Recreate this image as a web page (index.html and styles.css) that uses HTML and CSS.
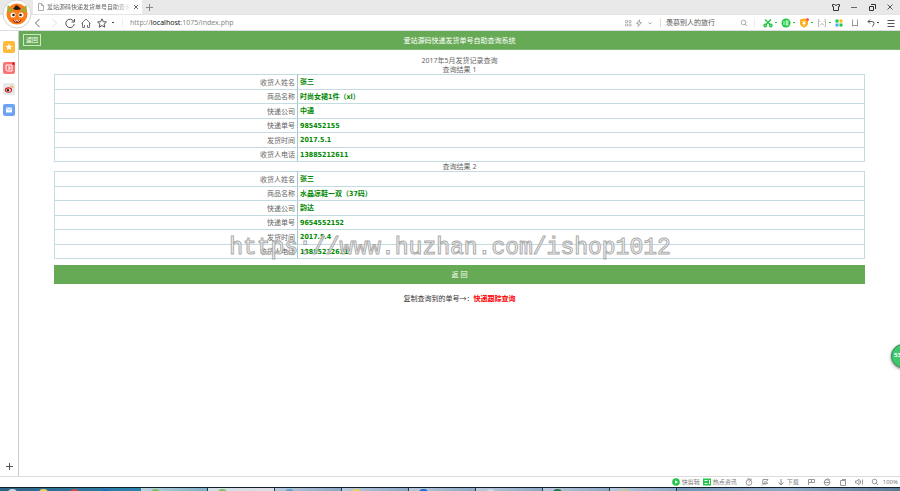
FILE: index.html
```html
<!DOCTYPE html>
<html lang="zh-CN">
<head>
  <meta charset="UTF-8" />
  <meta name="viewport" content="width=device-width, initial-scale=1" />
  <title>爱站源码快递发货单号自助查询系统</title>
  <link rel="stylesheet" href="styles.css">
</head>
<body>

  <header class="browser-top">
    <svg class="avatar" viewBox="0 0 30 30">
      <circle cx="15" cy="15" r="14" fill="#fff" stroke="#d4d4d4" stroke-width="1"/>
      <circle cx="15" cy="15" r="10.500" fill="#ff7d18"/>
      <path d="M7 14 Q4 10 6 6 Q9 10 12 11 Z M23 14 Q26 10 24 6 Q21 10 18 11 Z" fill="#a9a632"/>
      <path d="M11 10 Q12 9 14 6 Q17 7 19 10 Q15 12 11 10" fill="#2b1b12"/>
      <circle cx="11" cy="16" r="2.500" fill="#fff"/><circle cx="19" cy="16" r="2.500" fill="#fff"/>
      <circle cx="11.500" cy="16" r="1.300" fill="#32231b"/><circle cx="18.500" cy="16" r="1.300" fill="#32231b"/>
      <path d="M10 20 Q15 24 20 20 L18 23 Q15 25 12 23 Z" fill="#8c2517"/>
      <path d="M12 21 l1.500 1.500 l1.500-1 l1.500 1 l1.500-1.500" fill="none" stroke="#fff" stroke-width=".8"/>
    </svg>

    <div class="tab-strip">
      <div class="tab">
        <svg class="tab-icon" viewBox="0 0 8 8" fill="none" stroke="#aaa"><path d="M1.500 .5h3l2 2v5h-5z M4.500 .5v2h2"/></svg>
        <span class="tab-title">爱站源码快递发货单号自助查询</span>
        <button class="tab-close" aria-label="关闭标签"><svg viewBox="0 0 6 6" stroke="#666"><path d="M1 1l4 4M5 1l-4 4"/></svg></button>
      </div>
      <button class="tab-add" aria-label="新建标签"><svg viewBox="0 0 8 8" stroke="#888"><path d="M4.500 1v7M1 4.500h7"/></svg></button>
      <div class="window-buttons">
        <button aria-label="皮肤"><svg viewBox="0 0 8 8" fill="none" stroke="#333"><path d="M2.500 1.500h-2v2h1v4h5v-4h1v-2h-2l-1.500 1z"/></svg></button>
        <button aria-label="最小化"><svg viewBox="0 0 8 8" stroke="#666"><path d="M1 4.500h6"/></svg></button>
        <button aria-label="还原"><svg viewBox="0 0 8 8" fill="none" stroke="#333"><path d="M1.500 3.500h4v4h-4z M3 1.500h4.500V6"/></svg></button>
        <button aria-label="关闭"><svg viewBox="0 0 8 8" stroke="#555"><path d="M1.500 1.500l5 5M6.500 1.500l-5 5"/></svg></button>
      </div>
    </div>

    <div class="toolbar">
      <div class="nav-buttons">
        <button aria-label="后退"><svg viewBox="0 0 10 10" fill="none" stroke="#666"><path d="M6.500 1L2.500 5l4 4"/></svg></button>
        <button aria-label="前进"><svg viewBox="0 0 10 10" fill="none" stroke="#ddd"><path d="M3.500 1l4 4-4 4"/></svg></button>
        <button aria-label="刷新"><svg viewBox="0 0 10 10" fill="none" stroke="#555"><path d="M8.800 3.500A4.200 4.200 0 1 0 9.200 6M9.500 1v3h-3"/></svg></button>
        <button aria-label="主页"><svg viewBox="0 0 10 10" fill="none" stroke="#777"><path d="M.5 5.500L5 1l4.500 4.500M1.500 5v4.500h2V7M8.500 5v4.500h-2V7"/></svg></button>
        <button aria-label="收藏"><svg viewBox="0 0 10 10" fill="none" stroke="#555"><path d="M5 .8l1.300 2.900 3.100.3-2.300 2.100.7 3.100L5 7.600 2.200 9.200l.7-3.100L.6 4l3.100-.3z"/></svg></button>
      </div>
      <span class="dot dark"></span>
      <div class="address" role="textbox" aria-label="地址">http://<span class="host">localhost</span>:1075/index.php</div>
      <div class="address-tools">
        <svg viewBox="0 0 8 8" fill="none" stroke="#bbb"><path d="M1.500 1.500h2v2h-2zM5 1.500h2v2H5zM1.500 5h2v2h-2zM5 5h2v2H5z"/></svg>
        <svg viewBox="0 0 8 8" fill="none" stroke="#aaa"><path d="M4.500.8L1.500 4.500h2l-.5 3 3.500-4h-2z"/></svg>
        <svg viewBox="0 0 8 8" fill="none" stroke="#aaa"><path d="M2.500 3.500L4 5l1.500-1.500"/></svg>
      </div>
      <input class="search" type="text" aria-label="搜索" value="羡慕别人的旅行">
      <svg class="search-icon" viewBox="0 0 8 8" fill="none" stroke="#aaa"><circle cx="3.500" cy="3.500" r="2.300"/><path d="M5 5l2 2"/></svg>
      <div class="tools">
        <button class="drop" aria-label="截图"><svg viewBox="0 0 10 10" fill="none" stroke="#20c643" stroke-width="1.400"><path d="M2 1.500l5 5M8 1.500l-5 5"/><circle cx="2.200" cy="7.500" r="1.200"/><circle cx="7.800" cy="7.500" r="1.200"/></svg></button>
        <button class="drop" aria-label="翻译"><svg viewBox="0 0 10 10" fill="none"><circle cx="5" cy="5" r="4.500" fill="#1fc846"/><path d="M3 3v4M4.500 3h3M4.500 5h3M6 3v4.500M4.500 6.800h3" stroke="#d8ffe0"/></svg></button>
        <button class="drop" aria-label="网银"><svg viewBox="0 0 10 10" fill="none"><path d="M5 .5l4 1V5q0 3-4 4.700Q1 8 1 5V1.500z" fill="#fcae17"/><path d="M3.500 3L5 5l1.500-2M5 5v3M3.500 5.500h3" stroke="#fff"/><circle cx="8.500" cy="1.500" r="1.500" fill="#f55"/></svg></button>
        <button class="drop" aria-label="游戏"><svg viewBox="0 0 10 10" fill="none" stroke="#bbb"><path d="M2.500 1.500h-1v7h1M7.500 1.500h1v7h-1M3 7l2-1.500L7 7M3 3v1M7 3v1"/></svg></button>
        <button aria-label="应用"><svg viewBox="0 0 8 8"><path d="M.5.5h3v3h-3z" fill="#1bc946"/><path d="M4.500.5h3v3h-3z" fill="#fdb913"/><path d="M.5 4.500h3v3h-3z" fill="#39b3f4"/><path d="M4.500 4.500h3v3h-3z" fill="#1bc946"/></svg></button>
        <button aria-label="书签"><svg viewBox="0 0 8 8" fill="none" stroke="#999"><path d="M1.500.5v7M6.500.5v7M1.500 6.500h5"/></svg></button>
        <button class="drop dark" aria-label="撤销"><svg viewBox="0 0 8 8" fill="none" stroke="#555"><path d="M3 .5l-2 2 2 2M1 2.500h4q2 0 2 2t-2 3"/></svg></button>
        <button aria-label="菜单"><svg viewBox="0 0 8 8" stroke="#555"><path d="M.5 1.500h7M.5 4.500h7M.5 7.500h7"/></svg></button>
      </div>
    </div>
  </header>

  <div class="browser-body">
    <aside class="sidebar">
      <svg viewBox="0 0 12 12"><rect width="12" height="12" rx="2" fill="#fdba3d"/><path d="M6 2.500l1 2.300 2.500.2-1.900 1.600.6 2.400L6 7.700 3.800 9l.6-2.400L2.500 5 5 4.800z" fill="#fff"/></svg>
      <svg viewBox="0 0 12 12"><rect width="12" height="12" rx="2" fill="#fa7272"/><path d="M3 3h6v6H4.500L3 8zM5 5h2v2H5" fill="none" stroke="#fff"/><circle cx="10.500" cy="1.500" r="1.500" fill="#f02020"/></svg>
      <svg viewBox="0 0 12 12"><rect width="12" height="12" rx="2" fill="#e8e8e8"/><ellipse cx="5.500" cy="7" rx="3.700" ry="2.800" fill="#d22"/><ellipse cx="5.500" cy="7.200" rx="2.300" ry="1.600" fill="#fff"/><circle cx="5" cy="7.200" r="1.200" fill="#222"/><path d="M7.500 3q2.500-.5 2.500 2" fill="none" stroke="#f79b22"/></svg>
      <svg viewBox="0 0 12 12"><rect width="12" height="12" rx="2" fill="#6da3f5"/><path d="M3 3.500h6v5H3z" fill="#fff"/><path d="M3 4l3 2 3-2" fill="none" stroke="#a9c8f8"/></svg>
      <button class="side-add" aria-label="添加"><svg viewBox="0 0 7 7" stroke="#555"><path d="M3.500 0v7M0 3.500h7"/></svg></button>
    </aside>

    <main class="page">
      <div class="page-header">
        <button class="back-small">返回</button>
        <h1>爱站源码快递发货单号自助查询系统</h1>
      </div>

      <div class="results">
        <p class="result-title">2017年5月发货记录查询</p>
        <table class="result">
          <caption>查询结果 1</caption>
          <tr><th scope="row">收货人姓名</th><td>张三</td></tr>
          <tr><th scope="row">商品名称</th><td>时尚女裙1件（xl）</td></tr>
          <tr><th scope="row">快递公司</th><td>中通</td></tr>
          <tr><th scope="row">快递单号</th><td>985452155</td></tr>
          <tr><th scope="row">发货时间</th><td>2017.5.1</td></tr>
          <tr><th scope="row">收货人电话</th><td>13885212611</td></tr>
        </table>
        <table class="result">
          <caption>查询结果 2</caption>
          <tr><th scope="row">收货人姓名</th><td>张三</td></tr>
          <tr><th scope="row">商品名称</th><td>水晶凉鞋一双（37码）</td></tr>
          <tr><th scope="row">快递公司</th><td>韵达</td></tr>
          <tr><th scope="row">快递单号</th><td>9654552152</td></tr>
          <tr><th scope="row">发货时间</th><td>2017.5.4</td></tr>
          <tr><th scope="row">收货人电话</th><td>13885212611</td></tr>
        </table>
        <button class="back-wide">返 回</button>
        <p class="track">复制查询到的单号→：<a href="#">快递跟踪查询</a></p>
      </div>

      <div class="speed-ball">53%</div>
    </main>
  </div>

  <footer class="status-bar">
    <span class="status-item"><svg viewBox="0 0 8 8"><circle cx="4" cy="4" r="3.800" fill="#1fc846"/><path d="M3 2.200L6 4 3 5.800z" fill="#fff"/></svg>快剪辑</span>
    <span class="status-item"><svg viewBox="0 0 8 8"><path d="M0 .5h8v7H0z" fill="#1fc846"/><path d="M1.500 2.500h3M1.500 5.500h3M6.500 2v4" stroke="#fff"/></svg>热点资讯</span>
    <svg viewBox="0 0 8 8" fill="none" stroke="#999"><circle cx="4" cy="4.500" r="2.800"/><path d="M4 4.500l2.500-3.500M2 1h4"/></svg>
    <svg viewBox="0 0 8 8" fill="none" stroke="#999"><path d="M2 1.500h5l-1.500 2 1 2h-5zM1 7.500l2-2M4 3v4"/></svg>
    <span class="status-item"><svg viewBox="0 0 8 8" fill="none" stroke="#888"><path d="M4 1v6M1.500 4.500L4 7l2.500-2.500"/></svg>下载</span>
    <svg viewBox="0 0 8 8" fill="none" stroke="#999"><path d="M1.500 7V1.500h6v3h-6M4.500 2v2"/></svg>
    <svg viewBox="0 0 8 8" fill="none" stroke="#999"><circle cx="4" cy="4.500" r="2.800"/><path d="M1 4.500h6M2 2Q5-.5 7 2"/></svg>
    <svg viewBox="0 0 8 8" fill="none" stroke="#999"><path d="M1.500 2.500h5v5h-5zM3 1.500h4"/></svg>
    <svg viewBox="0 0 8 8" fill="none" stroke="#999"><path d="M.5 3h1.500l2-2v6l-2-2H.5zM5.500 2.500v3M7.500 1.500v5"/></svg>
    <span class="status-item zoom"><svg viewBox="0 0 8 8" fill="none" stroke="#999"><circle cx="3.500" cy="3.500" r="2.300"/><path d="M5 5l2 2"/></svg>100%</span>
  </footer>

  <div class="taskbar">
    <div class="task-start"><i class="gray"></i><i class="yellow"></i><i class="red"></i><i class="blue"></i></div>
    <div class="task light"><i class="green"></i></div>
    <div class="task light pale"><i class="green"></i></div>
    <div class="task"><i class="sky"></i></div>
    <div class="task"><i class="yellow"></i></div>
    <div class="task"><i class="blue"></i></div>
    <div class="task"><i class="gray"></i></div>
    <div class="task"><i class="darkgreen"></i></div>
    <div class="task"><i class="sand"></i></div>
    <div class="task-tray"></div>
  </div>

  <div class="watermark">https://www.huzhan.com/ishop1012</div>

</body>
</html>
```
FILE: styles.css
```css
* {
  box-sizing: border-box;
  margin: 0;
  padding: 0;
}

body {
  position: relative;
  font-family: "Noto Sans", "Noto Sans CJK SC", sans-serif;
  font-size: 7px;
  line-height: 9px;
  color: #666;
  background: #fff;
  height: 100vh;
  display: flex;
  flex-direction: column;
  overflow: hidden;
}

button {
  font: inherit;
  color: inherit;
  background: none;
  border: none;
  cursor: pointer;
}

svg {
  display: block;
  flex: none;
  width: 8px;
  height: 8px;
}

/* Browser top */
.browser-top {
  position: relative;
  border-bottom: 1px solid #dcdce2;
}

.avatar {
  position: absolute;
  left: 2px;
  top: -1px;
  width: 30px;
  height: 30px;
}

.tab-strip {
  display: flex;
  align-items: center;
  height: 14px;
  padding-left: 33px;
  background: #e9e9e9;
}

.tab {
  display: flex;
  align-items: center;
  align-self: stretch;
  gap: 2px;
  width: 109px;
  padding: 0 3px 0 4px;
  background: #fff;
}

.tab-title {
  flex: 1;
  overflow: hidden;
  white-space: nowrap;
  font-size: 6px;
  mask-image: linear-gradient(to right, #000 80%, transparent);
}

.tab-close svg {
  width: 6px;
  height: 6px;
}

.tab-add {
  margin-left: 3px;
}

.window-buttons {
  display: flex;
  gap: 10px;
  margin-left: auto;
  padding-right: 6px;
}

.toolbar {
  display: flex;
  align-items: center;
  height: 16px;
  padding: 0 5px 0 33px;
  border-top: 1px solid #e4e4e4;
}

.nav-buttons {
  display: flex;
  gap: 6px;
}

.nav-buttons svg {
  width: 10px;
  height: 10px;
}

.dot,
.drop::after {
  content: "";
  width: 2px;
  height: 1px;
  background: #20c643;
}

.dot {
  margin-left: 5px;
}

.dark.dot,
.dark.drop::after {
  background: #444;
}

.address {
  flex: 1;
  margin-left: 8px;
  padding-left: 7px;
  border-left: 1px solid #eee;
  color: #888;
}

.host {
  color: #111;
}

.address-tools {
  display: flex;
  gap: 3px;
  margin-right: 6px;
}

.search {
  width: 80px;
  padding-left: 5px;
  font: inherit;
  color: #555;
  background: none;
  border: none;
  border-left: 1px solid #ddd;
}

.search-icon {
  margin-right: 6px;
}

.tools {
  display: flex;
  align-items: center;
  gap: 8px;
  padding-left: 8px;
  border-left: 1px solid #eee;
}

.drop {
  display: flex;
  align-items: center;
  gap: 2px;
}

.tools .drop:not(.dark) {
  margin-right: -4px;
}

.tools .drop:not(.dark) svg {
  width: 10px;
  height: 10px;
}

/* Body */
.browser-body {
  flex: 1;
  display: flex;
  min-height: 0;
}

.sidebar {
  display: flex;
  flex-direction: column;
  align-items: center;
  gap: 9px;
  width: 19px;
  padding: 10px 0 6px;
  border-right: 1px solid #ccc;
}

.sidebar svg {
  width: 12px;
  height: 12px;
}

.side-add {
  margin-top: auto;
}

.sidebar .side-add svg {
  width: 7px;
  height: 7px;
}

.page {
  position: relative;
  flex: 1;
  overflow: hidden;
}

.page-header {
  display: grid;
  grid-template-columns: 1fr auto 1fr;
  align-items: center;
  height: 19px;
  padding: 0 4px;
  background: #67aa55;
  border-bottom: 1px solid #7fb870;
  color: #fff;
}

.page-header h1 {
  font-size: 7px;
  font-weight: normal;
}

.back-small {
  justify-self: start;
  width: 18px;
  height: 12px;
  border: 1px solid #cfe5c9;
  font-size: 6px;
  line-height: 10px;
}

.results {
  margin: 0 4%;
  padding-top: 6px;
}

.result-title {
  text-align: center;
}

/* Result tables */
.result {
  width: 100%;
  border-collapse: collapse;
  border: 1px solid #a3c6cf;
}

.result caption {
  line-height: 9px;
}

.result th,
.result td {
  height: 14px;
  padding: 0 2px;
  border: 1px solid #c3dbe1;
}

.result tr:nth-child(odd) th,
.result tr:nth-child(odd) td {
  height: 15px;
}

.result th {
  width: 30%;
  text-align: right;
  font-weight: normal;
  border-right-color: #a3c6cf;
}

.result td {
  padding-top: 1px;
  color: #080;
  font-family: "DejaVu Sans Condensed", "Noto Sans CJK SC", sans-serif;
  font-weight: bold;
}

.back-wide {
  display: block;
  width: 100%;
  height: 19px;
  margin-top: 6px;
  background: #67aa55;
  color: #fff;
}

.track {
  margin-top: 10px;
  text-align: center;
  color: #333;
}

.track a {
  color: #f00;
  font-weight: bold;
  text-decoration: none;
}

.watermark {
  position: absolute;
  left: 0;
  right: 0;
  top: 235px;
  text-align: center;
  font-family: "Liberation Mono", monospace;
  font-size: 23px;
  line-height: 26px;
  color: rgba(255, 255, 255, 0.7);
  -webkit-text-stroke: 1px #aaa;
  pointer-events: none;
}

.speed-ball {
  position: absolute;
  right: -15px;
  top: 313px;
  width: 24px;
  height: 24px;
  padding-left: 2px;
  border: 1px solid #2f8f50;
  border-radius: 50%;
  background: #3fc76b;
  box-shadow: 0 1px 3px rgba(0, 0, 0, 0.5);
  color: #fff;
  font-size: 6px;
  font-weight: bold;
  line-height: 20px;
}

/* Bottom bars */
.status-bar {
  display: flex;
  align-items: center;
  justify-content: flex-end;
  gap: 8px;
  height: 11px;
  padding-right: 2px;
  border-top: 1px solid #ddd;
  font-size: 6px;
  color: #777;
}

.status-item {
  display: flex;
  align-items: center;
  gap: 2px;
}

.status-item:first-child {
  margin-right: -5px;
}

.zoom {
  gap: 4px;
}

.taskbar {
  display: flex;
  height: 4px;
  border-top: 1px solid #15202c;
  background: #7f9dbd;
}

.task-start,
.task {
  display: flex;
  overflow: hidden;
}

.task-start {
  width: 141px;
  gap: 22px;
  padding-left: 8px;
  background: linear-gradient(to right, #2f6385, #2b85ad);
}

.task {
  width: 67px;
  padding-left: 10px;
  border-right: 1px solid #26384c;
  background: linear-gradient(to right, #b8c9dc, #8da8c5);
}

.task.light {
  background: linear-gradient(to right, #b9d3dc, #7fb0c6);
}

.task.pale {
  background: linear-gradient(to right, #cfdfe4, #dcdce6);
}

.task-tray {
  flex: 1;
  background: linear-gradient(to right, #7595b6, #90abc8 50%, #5b7896);
}

.taskbar i {
  width: 9px;
  height: 6px;
  margin-top: 1px;
  border-radius: 4px 4px 0 0;
}

.gray { background: #d0d6dc; }
.yellow { background: #e6d65a; }
.red { background: #c8504a; }
.blue { background: #1c6fc9; }
.green { background: #7fc06a; }
.sky { background: #5fa9cf; }
.darkgreen { background: #237a48; }
.sand { background: #cfc49a; }
```
